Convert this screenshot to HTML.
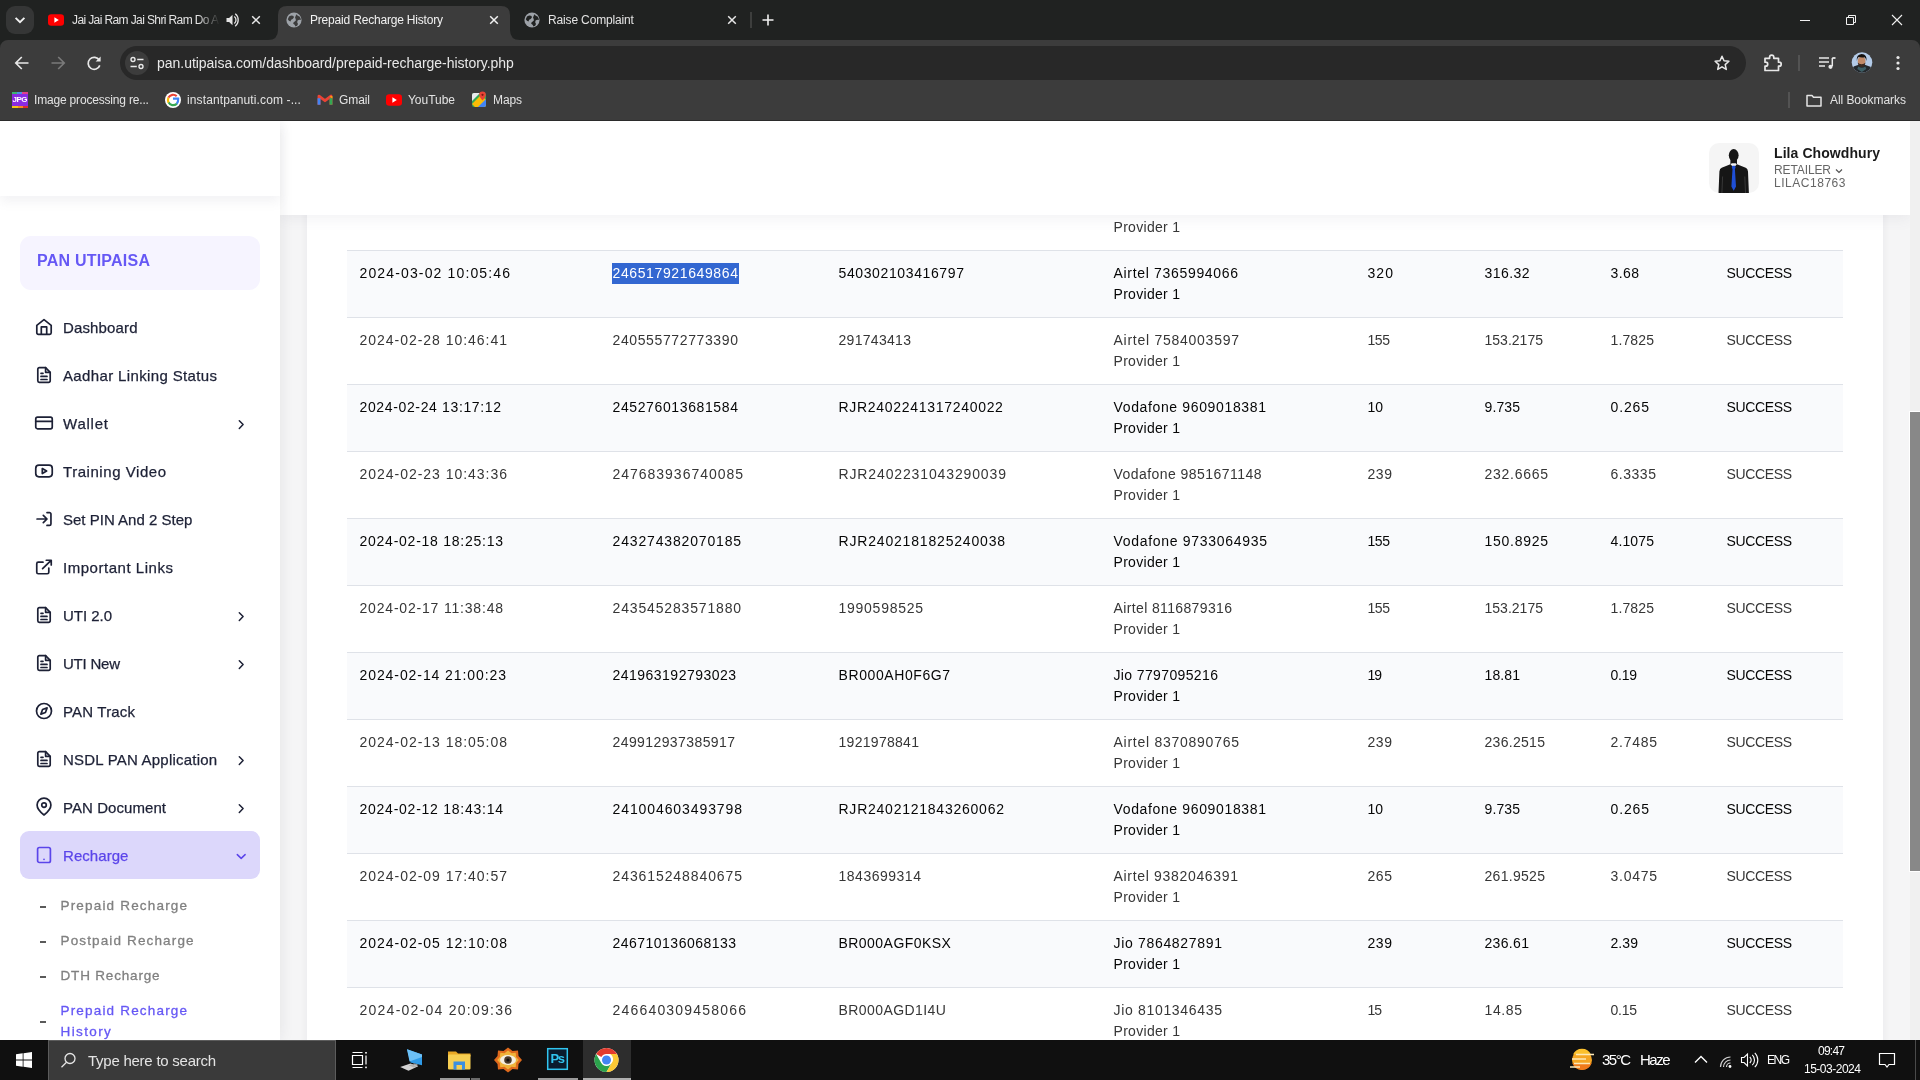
<!DOCTYPE html>
<html lang="en"><head><meta charset="utf-8"><title>Prepaid Recharge History</title>
<style>
*{margin:0;padding:0;box-sizing:border-box}
html,body{width:1920px;height:1080px;overflow:hidden;background:#fff;font-family:"Liberation Sans",sans-serif}
.abs,.abs span,.abs div,.abs svg{position:absolute}
span{white-space:pre}
.ui,#page,#taskbar{will-change:transform}
#tabstrip{left:0;top:0;width:1920px;height:40px;background:#202221}
#toolbar{left:0;top:40px;width:1920px;height:81px;background:#3c3c3c}
#tbline{left:0;top:120px;width:1920px;height:1px;background:#2b2b2b}
.ui{font:12px "Liberation Sans",sans-serif;color:#e3e3e3;line-height:16px}
.url{font:14px "Liberation Sans",sans-serif;color:#e8e8e8;line-height:18px}
#page{left:0;top:121px;width:1920px;height:919px;background:#f5f5f6;overflow:hidden}
#side{left:0;top:0;width:280px;height:919px;background:#fff;z-index:3;box-shadow:0 0 14px rgba(40,40,50,.085)}
#sidehead{left:0;top:0;width:280px;height:75px;background:#fff;box-shadow:0 6px 10px rgba(120,120,140,.09)}
#card{left:307px;top:60px;width:1576px;height:900px;background:#fff;box-shadow:0 0 8px rgba(40,40,50,.06)}
#head{left:280px;top:0;width:1630px;height:94px;background:#fff;z-index:2;box-shadow:0 3px 14px rgba(100,100,120,.09)}
#sbtrack{left:1910px;top:0;width:10px;height:919px;background:#f0f0f0;z-index:4}
#sbthumb{left:1909px;top:290px;width:12px;height:461px;background:#888;border:1px solid #fff;z-index:4}
.row{left:347px;width:1496px;height:67px;border-top:1px solid #dfe2e8}
.row.s{background:#f9fafc}
.t{font:14px "Liberation Sans",sans-serif;line-height:21px;color:#363636}
.t.d{color:#060606}
.m{font:15px "Liberation Sans",sans-serif;line-height:20px;color:#1d2136;-webkit-text-stroke:.25px #1d2136}
.sm{font:13.5px "Liberation Sans",sans-serif;line-height:21px;color:#808080;-webkit-text-stroke:.3px #808080}
.pur{color:#6658f5;-webkit-text-stroke-color:#6658f5}
#taskbar{left:0;top:1040px;width:1920px;height:40px;background:#101010}
.tb{font:12px "Liberation Sans",sans-serif;color:#fff;line-height:16px}
</style></head>
<body>
<div class="abs" id="tabstrip"></div><div class="abs" id="toolbar"></div><div class="abs" id="tbline"></div>

<svg class="abs" style="position:absolute;left:0;top:0" width="1920" height="121" viewBox="0 0 1920 121" fill="none">
<path d="M0 40h8a8 8 0 0 0-8 8zM1920 40h-8a8 8 0 0 1 8 8z" fill="#202221"/>
<!-- tab search -->
<rect x="6" y="6" width="28" height="28" rx="9" fill="#353636"/>
<path d="M15.6 17.8l4.4 4.4 4.4-4.4" stroke="#f1f1f1" stroke-width="1.9"/>
<!-- active tab -->
<path d="M268 40q10 0 10-10V15q0-9 9-9h214q9 0 9 9v15q0 10 10 10z" fill="#3c3c3c"/>
<!-- youtube favicon -->
<rect x="48" y="14.2" width="16" height="11.6" rx="3.2" fill="#f00"/>
<path d="M54.4 17.2l4.4 2.8-4.4 2.8z" fill="#fff"/>
<!-- speaker -->
<path d="M226.5 18v4h2.6l3.4 3.2V14.8L229.100 18z" fill="#e3e3e3"/>
<path d="M234.300 16.500q1.700 1.400 1.700 3.500t-1.700 3.500M235.200 13.800q3 2.300 3 6.200t-3 6.200" stroke="#e3e3e3" stroke-width="1.300"/>
<!-- close x tab1 -->
<path d="M252.200 16.200l7.600 7.600m0-7.600l-7.600 7.600" stroke="#e8e8e8" stroke-width="1.500"/>
<!-- globe active -->
<circle cx="294" cy="20" r="7.600" fill="#9da2a8"/>
<path d="M289 16.500q2.500-1.500 4.500-.5 1.200 1.600-.8 3-2 .4-2.200 2.400-1.800-.4-2.700-2.200zM296.500 14.200q1 1.800 3 2.200 1.300 1.400 1.400 3.600-2-.6-3.300.6-1 1.800.4 3.400-.5 2-2.500 2.600-.6-2.200-2.300-2.800-.2-1.800 1.500-2.400 1.800-.8 1-2.500-1.200-1.200-.2-2.700z" fill="#3c3c3c"/>
<path d="M490.200 16.200l7.600 7.600m0-7.600l-7.600 7.600" stroke="#f1f1f1" stroke-width="1.500"/>
<!-- globe tab3 -->
<circle cx="532" cy="20" r="7.600" fill="#9da2a8"/>
<path d="M527 16.500q2.500-1.500 4.500-.5 1.200 1.600-.8 3-2 .4-2.200 2.400-1.800-.4-2.700-2.200zM534.500 14.200q1 1.800 3 2.200 1.300 1.400 1.400 3.600-2-.6-3.300.6-1 1.800.4 3.400-.5 2-2.500 2.600-.6-2.200-2.300-2.800-.2-1.800 1.500-2.400 1.800-.8 1-2.500-1.200-1.200-.2-2.700z" fill="#202221"/>
<path d="M728.200 16.200l7.600 7.600m0-7.600l-7.600 7.600" stroke="#e8e8e8" stroke-width="1.500"/>
<rect x="750.500" y="12" width="1" height="16" fill="#5a5a5a"/>
<path d="M762.500 20h11M768 14.500v11" stroke="#f1f1f1" stroke-width="1.600"/>
<!-- window controls -->
<path d="M1800 20.500h10" stroke="#f1f1f1" stroke-width="1"/>
<path d="M1846.500 17.500h7v7h-7zM1848.500 17.500v-2h7v7h-2" stroke="#f1f1f1" stroke-width="1"/>
<path d="M1892 15l10 10m0-10l-10 10" stroke="#f1f1f1" stroke-width="1.100"/>
<!-- nav buttons -->
<path d="M28.500 63h-12.500m5.800-6l-6 6 6 6" stroke="#e8e8e8" stroke-width="1.700"/>
<path d="M51.500 63h12.500m-5.800-6l6 6-6 6" stroke="#7a7a7a" stroke-width="1.700"/>
<path d="M99.300 60.200a6 6 0 1 0 .5 5.200" stroke="#e8e8e8" stroke-width="1.700"/>
<path d="M100.600 56.500v5h-5z" fill="#e8e8e8"/>
<!-- omnibox -->
<rect x="120" y="46" width="1626" height="34" rx="17" fill="#282828"/>
<circle cx="137" cy="63" r="12" fill="#3c3c3c"/>
<path d="M137.200 59.500h6.300M130.500 66.500h6.300" stroke="#e8e8e8" stroke-width="1.600"/>
<circle cx="133" cy="59.500" r="2" stroke="#e8e8e8" stroke-width="1.400"/>
<circle cx="141" cy="66.500" r="2" stroke="#e8e8e8" stroke-width="1.400"/>
<!-- star -->
<path d="M1722 56.300l2 4.500 4.900.5-3.700 3.300 1.100 4.800-4.300-2.600-4.300 2.600 1.100-4.800-3.700-3.300 4.900-.5z" stroke="#e8e8e8" stroke-width="1.500" stroke-linejoin="round"/>
<!-- extension puzzle -->
<path d="M1765 58.300h4.600v-1.100a2.100 2.100 0 0 1 4.200 0v1.100h4.700v3.900h.7a2 2 0 0 1 0 4h-.7v4.300h-13.500v-4.300h.7a2 2 0 0 0 0-4h-.7z" stroke="#e8e8e8" stroke-width="1.700" stroke-linejoin="round"/>
<rect x="1798.500" y="55" width="1" height="16" fill="#6a6a6a"/>
<!-- media -->
<path d="M1819 58h10M1819 62h10M1819 66h6" stroke="#e8e8e8" stroke-width="1.600"/>
<path d="M1832.300 58v8.200" stroke="#e8e8e8" stroke-width="1.500"/><circle cx="1830.500" cy="66.800" r="2.100" fill="#e8e8e8"/><path d="M1832.300 58h3.200" stroke="#e8e8e8" stroke-width="1.800"/>
<!-- avatar -->
<clipPath id="avc"><circle cx="1862" cy="62.500" r="10.300"/></clipPath>
<g clip-path="url(#avc)">
<rect x="1851" y="52" width="22" height="22" fill="#b3cbe8"/>
<path d="M1851 74v-5.500q3-3 7-3.500h7.500q4.500.8 7.500 4v5z" fill="#23282c"/>
<path d="M1858.300 66.500q3.500 2.500 7 0l1 2.500-4.500 3-4.500-3z" fill="#3d5f66"/>
<ellipse cx="1861.600" cy="61" rx="3.900" ry="4.700" fill="#c08a68"/>
<path d="M1857.700 62.500q.6 4.500 3.900 4.600 3.300-.1 3.900-4.600-1.200 1.700-3.900 1.700t-3.900-1.700z" fill="#3a2a22"/>
<path d="M1856.800 61q-.8-6.500 4.800-7 5.800.3 4.800 7-.6-3-1.800-3.800-3 .6-6-.2-1.400 1.200-1.800 4z" fill="#14110f"/>
</g>
<!-- dots -->
<circle cx="1898" cy="57.500" r="1.600" fill="#e8e8e8"/><circle cx="1898" cy="63" r="1.600" fill="#e8e8e8"/><circle cx="1898" cy="68.500" r="1.600" fill="#e8e8e8"/>
<!-- bookmarks icons -->
<rect x="12" y="92" width="16" height="16" rx="1.500" fill="#8a2be2"/>
<rect x="12" y="92" width="16" height="2" fill="#3cb371"/><rect x="17" y="92" width="5" height="2" fill="#4a90e2"/><rect x="22" y="92" width="6" height="2" fill="#e0408a"/>
<rect x="12" y="106" width="16" height="2" fill="#f5c518"/><rect x="18" y="106" width="5" height="2" fill="#f58a1f"/><rect x="23" y="106" width="5" height="2" fill="#e02d2d"/>
<circle cx="173" cy="100" r="8" fill="#fff"/>
<path d="M173 98.700h5.200q.3 3.200-1.600 5.200" stroke="#4285f4" stroke-width="2.200"/>
<path d="M176.800 103.800q-2 1.600-4.600 1.300-2.500-.5-3.700-2.800" stroke="#34a853" stroke-width="2.200"/>
<path d="M168.500 102.500q-1.200-2.500 0-5" stroke="#fbbc05" stroke-width="2.200"/>
<path d="M168.500 97.600q1.200-2.300 3.800-2.800 2.600-.3 4.400 1.300" stroke="#ea4335" stroke-width="2.200"/>
<!-- gmail -->
<path d="M319 104.700v-8.600l6 4.600 6-4.600v8.600" stroke="#ea4335" stroke-width="2.900" stroke-linejoin="round"/>
<path d="M319 104.700v-6.500" stroke="#4285f4" stroke-width="2.900"/><path d="M331 104.700v-6.500" stroke="#34a853" stroke-width="2.900"/><path d="M329.600 96.200h2.850v2.400z" fill="#fbbc05"/>
<!-- youtube bm -->
<rect x="386" y="94.200" width="16" height="11.600" rx="3.200" fill="#f00"/><path d="M392.400 97.200l4.400 2.800-4.400 2.800z" fill="#fff"/>
<!-- maps -->
<rect x="472" y="93" width="14" height="14" rx="2" fill="#34a853"/>
<path d="M472 104l9-9 5 5v5a2 2 0 0 1-2 2h-9z" fill="#fbbc05"/><path d="M478 107l8-8v6a2 2 0 0 1-2 2z" fill="#4285f4"/><path d="M472 95a2 2 0 0 1 2-2h6l-8 8z" fill="#e8eaed"/>
<path d="M482.500 91.500a3.300 3.300 0 0 1 3.300 3.300q0 2-3.300 5.700-3.300-3.700-3.300-5.700a3.300 3.300 0 0 1 3.300-3.300z" fill="#ea4335"/><circle cx="482.500" cy="94.800" r="1.100" fill="#7a1a12"/>
<rect x="1788.500" y="92" width="1" height="16" fill="#6a6a6a"/>
<path d="M1807 95.500h5l1.500 1.800h7.500v8.700h-14z" stroke="#e3e3e3" stroke-width="1.500" stroke-linejoin="round"/>
</svg>
<div class="abs ui" style="position:absolute;left:0;top:0;width:1920px;height:121px">
<span style="left:72px;top:12px;letter-spacing:-0.61px;width:148px;overflow:hidden;-webkit-mask-image:linear-gradient(90deg,#000 85%,transparent);">Jai Jai Ram Jai Shri Ram Do A</span><span style="left:310px;top:12px;letter-spacing:-0.19px;color:#f1f1f1;">Prepaid Recharge History</span><span style="left:548px;top:12px;letter-spacing:-0.15px;">Raise Complaint</span><span class="url" style="left:157px;top:54px;letter-spacing:-0.03px;">pan.utipaisa.com/dashboard/prepaid-recharge-history.php</span><span style="left:34px;top:92px;letter-spacing:-0.18px;">Image processing re...</span><span style="left:187px;top:92px;letter-spacing:0.12px;">instantpanuti.com -...</span><span style="left:339px;top:92px;letter-spacing:-0.09px;">Gmail</span><span style="left:408px;top:92px;letter-spacing:-0.03px;">YouTube</span><span style="left:493px;top:92px;letter-spacing:-0.11px;">Maps</span><span style="left:1830px;top:92px;letter-spacing:-0.06px;">All Bookmarks</span><span style="left:12.6px;top:95.3px;letter-spacing:-0.51px;font:bold 8px 'Liberation Sans',sans-serif;color:#fff;line-height:9px;">JPG</span>
</div>
<div class="abs" id="page">
<div id="card"></div>
<div class="abs row" style="top:62px"><span class="t" style="left:766.5px;top:33px;letter-spacing:0.3px;">Provider 1</span></div>
<div class="abs row s" style="top:129px"><span class="t d" style="left:12.5px;top:12px;letter-spacing:1.14px;">2024-03-02 10:05:46</span><div style="left:265px;top:12px;width:127px;height:21px;background:#3367d1"></div><span class="t d" style="left:265.5px;top:12px;letter-spacing:0.62px;color:#fff;">246517921649864</span><span class="t d" style="left:491.5px;top:12px;letter-spacing:0.62px;">540302103416797</span><span class="t d" style="left:766.5px;top:12px;letter-spacing:0.68px;">Airtel 7365994066</span><span class="t d" style="left:1020.5px;top:12px;letter-spacing:1.07px;">320</span><span class="t d" style="left:1137.5px;top:12px;letter-spacing:0.43px;">316.32</span><span class="t d" style="left:1263.5px;top:12px;letter-spacing:0.42px;">3.68</span><span class="t d" style="left:766.5px;top:33px;letter-spacing:0.3px;">Provider 1</span><span class="t d" style="left:1379.5px;top:12px;letter-spacing:-0.36px;">SUCCESS</span></div>
<div class="abs row" style="top:196px"><span class="t" style="left:12.5px;top:12px;letter-spacing:0.97px;">2024-02-28 10:46:41</span><span class="t" style="left:265.5px;top:12px;letter-spacing:0.62px;">240555772773390</span><span class="t" style="left:491.5px;top:12px;letter-spacing:0.3px;">291743413</span><span class="t" style="left:766.5px;top:12px;letter-spacing:0.74px;">Airtel 7584003597</span><span class="t" style="left:1020.5px;top:12px;letter-spacing:-0.43px;">155</span><span class="t" style="left:1137.5px;top:12px;letter-spacing:0.01px;">153.2175</span><span class="t" style="left:1263.5px;top:12px;letter-spacing:0.13px;">1.7825</span><span class="t" style="left:766.5px;top:33px;letter-spacing:0.3px;">Provider 1</span><span class="t" style="left:1379.5px;top:12px;letter-spacing:-0.36px;">SUCCESS</span></div>
<div class="abs row s" style="top:263px"><span class="t d" style="left:12.5px;top:12px;letter-spacing:0.64px;">2024-02-24 13:17:12</span><span class="t d" style="left:265.5px;top:12px;letter-spacing:0.62px;">245276013681584</span><span class="t d" style="left:491.5px;top:12px;letter-spacing:0.7px;">RJR2402241317240022</span><span class="t d" style="left:766.5px;top:12px;letter-spacing:0.64px;">Vodafone 9609018381</span><span class="t d" style="left:1020.5px;top:12px;letter-spacing:-0.08px;">10</span><span class="t d" style="left:1137.5px;top:12px;letter-spacing:0.11px;">9.735</span><span class="t d" style="left:1263.5px;top:12px;letter-spacing:0.86px;">0.265</span><span class="t d" style="left:766.5px;top:33px;letter-spacing:0.3px;">Provider 1</span><span class="t d" style="left:1379.5px;top:12px;letter-spacing:-0.36px;">SUCCESS</span></div>
<div class="abs row" style="top:330px"><span class="t" style="left:12.5px;top:12px;letter-spacing:0.97px;">2024-02-23 10:43:36</span><span class="t" style="left:265.5px;top:12px;letter-spacing:0.98px;">247683936740085</span><span class="t" style="left:491.5px;top:12px;letter-spacing:0.87px;">RJR2402231043290039</span><span class="t" style="left:766.5px;top:12px;letter-spacing:0.45px;">Vodafone 9851671148</span><span class="t" style="left:1020.5px;top:12px;letter-spacing:0.57px;">239</span><span class="t" style="left:1137.5px;top:12px;letter-spacing:0.73px;">232.6665</span><span class="t" style="left:1263.5px;top:12px;letter-spacing:0.53px;">6.3335</span><span class="t" style="left:766.5px;top:33px;letter-spacing:0.3px;">Provider 1</span><span class="t" style="left:1379.5px;top:12px;letter-spacing:-0.36px;">SUCCESS</span></div>
<div class="abs row s" style="top:397px"><span class="t d" style="left:12.5px;top:12px;letter-spacing:0.75px;">2024-02-18 18:25:13</span><span class="t d" style="left:265.5px;top:12px;letter-spacing:0.84px;">243274382070185</span><span class="t d" style="left:491.5px;top:12px;letter-spacing:0.82px;">RJR2402181825240038</span><span class="t d" style="left:766.5px;top:12px;letter-spacing:0.7px;">Vodafone 9733064935</span><span class="t d" style="left:1020.5px;top:12px;letter-spacing:-0.43px;">155</span><span class="t d" style="left:1137.5px;top:12px;letter-spacing:0.73px;">150.8925</span><span class="t d" style="left:1263.5px;top:12px;letter-spacing:0.13px;">4.1075</span><span class="t d" style="left:766.5px;top:33px;letter-spacing:0.3px;">Provider 1</span><span class="t d" style="left:1379.5px;top:12px;letter-spacing:-0.36px;">SUCCESS</span></div>
<div class="abs row" style="top:464px"><span class="t" style="left:12.5px;top:12px;letter-spacing:0.81px;">2024-02-17 11:38:48</span><span class="t" style="left:265.5px;top:12px;letter-spacing:0.84px;">243545283571880</span><span class="t" style="left:491.5px;top:12px;letter-spacing:0.74px;">1990598525</span><span class="t" style="left:766.5px;top:12px;letter-spacing:0.37px;">Airtel 8116879316</span><span class="t" style="left:1020.5px;top:12px;letter-spacing:-0.43px;">155</span><span class="t" style="left:1137.5px;top:12px;letter-spacing:0.01px;">153.2175</span><span class="t" style="left:1263.5px;top:12px;letter-spacing:0.13px;">1.7825</span><span class="t" style="left:766.5px;top:33px;letter-spacing:0.3px;">Provider 1</span><span class="t" style="left:1379.5px;top:12px;letter-spacing:-0.36px;">SUCCESS</span></div>
<div class="abs row s" style="top:531px"><span class="t d" style="left:12.5px;top:12px;letter-spacing:0.92px;">2024-02-14 21:00:23</span><span class="t d" style="left:265.5px;top:12px;letter-spacing:0.48px;">241963192793023</span><span class="t d" style="left:491.5px;top:12px;letter-spacing:0.59px;">BR000AH0F6G7</span><span class="t d" style="left:766.5px;top:12px;letter-spacing:0.37px;">Jio 7797095216</span><span class="t d" style="left:1020.5px;top:12px;letter-spacing:-1.08px;">19</span><span class="t d" style="left:1137.5px;top:12px;letter-spacing:0.11px;">18.81</span><span class="t d" style="left:1263.5px;top:12px;letter-spacing:-0.25px;">0.19</span><span class="t d" style="left:766.5px;top:33px;letter-spacing:0.3px;">Provider 1</span><span class="t d" style="left:1379.5px;top:12px;letter-spacing:-0.36px;">SUCCESS</span></div>
<div class="abs row" style="top:598px"><span class="t" style="left:12.5px;top:12px;letter-spacing:0.97px;">2024-02-13 18:05:08</span><span class="t" style="left:265.5px;top:12px;letter-spacing:0.41px;">249912937385917</span><span class="t" style="left:491.5px;top:12px;letter-spacing:0.29px;">1921978841</span><span class="t" style="left:766.5px;top:12px;letter-spacing:0.74px;">Airtel 8370890765</span><span class="t" style="left:1020.5px;top:12px;letter-spacing:0.57px;">239</span><span class="t" style="left:1137.5px;top:12px;letter-spacing:0.3px;">236.2515</span><span class="t" style="left:1263.5px;top:12px;letter-spacing:0.73px;">2.7485</span><span class="t" style="left:766.5px;top:33px;letter-spacing:0.3px;">Provider 1</span><span class="t" style="left:1379.5px;top:12px;letter-spacing:-0.36px;">SUCCESS</span></div>
<div class="abs row s" style="top:665px"><span class="t d" style="left:12.5px;top:12px;letter-spacing:0.75px;">2024-02-12 18:43:14</span><span class="t d" style="left:265.5px;top:12px;letter-spacing:0.91px;">241004603493798</span><span class="t d" style="left:491.5px;top:12px;letter-spacing:0.76px;">RJR2402121843260062</span><span class="t d" style="left:766.5px;top:12px;letter-spacing:0.64px;">Vodafone 9609018381</span><span class="t d" style="left:1020.5px;top:12px;letter-spacing:-0.08px;">10</span><span class="t d" style="left:1137.5px;top:12px;letter-spacing:0.11px;">9.735</span><span class="t d" style="left:1263.5px;top:12px;letter-spacing:0.86px;">0.265</span><span class="t d" style="left:766.5px;top:33px;letter-spacing:0.3px;">Provider 1</span><span class="t d" style="left:1379.5px;top:12px;letter-spacing:-0.36px;">SUCCESS</span></div>
<div class="abs row" style="top:732px"><span class="t" style="left:12.5px;top:12px;letter-spacing:0.97px;">2024-02-09 17:40:57</span><span class="t" style="left:265.5px;top:12px;letter-spacing:0.91px;">243615248840675</span><span class="t" style="left:491.5px;top:12px;letter-spacing:0.51px;">1843699314</span><span class="t" style="left:766.5px;top:12px;letter-spacing:0.68px;">Airtel 9382046391</span><span class="t" style="left:1020.5px;top:12px;letter-spacing:0.57px;">265</span><span class="t" style="left:1137.5px;top:12px;letter-spacing:0.3px;">261.9525</span><span class="t" style="left:1263.5px;top:12px;letter-spacing:0.73px;">3.0475</span><span class="t" style="left:766.5px;top:33px;letter-spacing:0.3px;">Provider 1</span><span class="t" style="left:1379.5px;top:12px;letter-spacing:-0.36px;">SUCCESS</span></div>
<div class="abs row s" style="top:799px"><span class="t d" style="left:12.5px;top:12px;letter-spacing:0.97px;">2024-02-05 12:10:08</span><span class="t d" style="left:265.5px;top:12px;letter-spacing:0.48px;">246710136068133</span><span class="t d" style="left:491.5px;top:12px;letter-spacing:0.46px;">BR000AGF0KSX</span><span class="t d" style="left:766.5px;top:12px;letter-spacing:0.68px;">Jio 7864827891</span><span class="t d" style="left:1020.5px;top:12px;letter-spacing:0.57px;">239</span><span class="t d" style="left:1137.5px;top:12px;letter-spacing:0.33px;">236.61</span><span class="t d" style="left:1263.5px;top:12px;letter-spacing:0.08px;">2.39</span><span class="t d" style="left:766.5px;top:33px;letter-spacing:0.3px;">Provider 1</span><span class="t d" style="left:1379.5px;top:12px;letter-spacing:-0.36px;">SUCCESS</span></div>
<div class="abs row" style="top:866px"><span class="t" style="left:12.5px;top:12px;letter-spacing:1.25px;">2024-02-04 20:09:36</span><span class="t" style="left:265.5px;top:12px;letter-spacing:1.19px;">246640309458066</span><span class="t" style="left:491.5px;top:12px;letter-spacing:0.43px;">BR000AGD1I4U</span><span class="t" style="left:766.5px;top:12px;letter-spacing:0.68px;">Jio 8101346435</span><span class="t" style="left:1020.5px;top:12px;letter-spacing:-1.08px;">15</span><span class="t" style="left:1137.5px;top:12px;letter-spacing:0.61px;">14.85</span><span class="t" style="left:1263.5px;top:12px;letter-spacing:-0.25px;">0.15</span><span class="t" style="left:766.5px;top:33px;letter-spacing:0.3px;">Provider 1</span><span class="t" style="left:1379.5px;top:12px;letter-spacing:-0.36px;">SUCCESS</span></div>
<div id="side">
<div id="sidehead"></div>
<div style="left:20px;top:115px;width:240px;height:54px;border-radius:11px;background:#f6f4ff"></div>
<span style="left:37px;top:130px;letter-spacing:0.22px;font:bold 16px 'Liberation Sans',sans-serif;line-height:20px;color:#6658f5;">PAN UTIPAISA</span><svg style="left:34px;top:196px" width="20" height="20" viewBox="0 0 20 20" fill="none" stroke="#1d2136" stroke-width="1.700" stroke-linecap="round" stroke-linejoin="round"><path d="M2.800 8.300L10 2.700l7.200 5.600v7.500a1.500 1.500 0 0 1-1.500 1.500H4.300a1.500 1.500 0 0 1-1.500-1.500z"/><path d="M7.300 17.200v-7.300h5.400v7.300"/></svg><span class="m" style="left:63px;top:197px;letter-spacing:0.14px;">Dashboard</span>
<svg style="left:34px;top:244px" width="20" height="20" viewBox="0 0 20 20" fill="none" stroke="#1d2136" stroke-width="1.700" stroke-linecap="round" stroke-linejoin="round"><path d="M11.600 2.700H5.300a1.500 1.500 0 0 0-1.500 1.500v11.600a1.500 1.500 0 0 0 1.500 1.500h9.400a1.500 1.500 0 0 0 1.500-1.500V7.300z"/><path d="M11.600 2.700v4.600h4.600M7 11.400h6M7 14.500h6M7 8.300h2"/></svg><span class="m" style="left:63px;top:245px;letter-spacing:0.36px;">Aadhar Linking Status</span>
<svg style="left:34px;top:292px" width="20" height="20" viewBox="0 0 20 20" fill="none" stroke="#1d2136" stroke-width="1.700" stroke-linecap="round" stroke-linejoin="round"><rect x="1.750" y="4.200" width="16.500" height="11.600" rx="1.800"/><path d="M1.750 8.300h16.500"/></svg><span class="m" style="left:63px;top:293px;letter-spacing:0.78px;">Wallet</span><svg style="left:235px;top:297px" width="12" height="12" viewBox="0 0 12 12" fill="none" stroke="#1d2136" stroke-width="1.500" stroke-linecap="round" stroke-linejoin="round"><path d="M4.300 2.700l3.800 3.900-3.800 3.900"/></svg>
<svg style="left:34px;top:340px" width="20" height="20" viewBox="0 0 20 20" fill="none" stroke="#1d2136" stroke-width="1.700" stroke-linecap="round" stroke-linejoin="round"><rect x="1.750" y="4.200" width="16.500" height="11.600" rx="3.200"/><path d="M8.300 7.500l4.300 2.500-4.300 2.500z"/></svg><span class="m" style="left:63px;top:341px;letter-spacing:0.55px;">Training Video</span>
<svg style="left:34px;top:388px" width="20" height="20" viewBox="0 0 20 20" fill="none" stroke="#1d2136" stroke-width="1.700" stroke-linecap="round" stroke-linejoin="round"><path d="M13 3.550h2.450a1.500 1.500 0 0 1 1.500 1.500v9.900a1.500 1.500 0 0 1-1.500 1.500H13M3.050 10h9.700M9.300 6.300l3.700 3.700-3.700 3.700"/></svg><span class="m" style="left:63px;top:389px;letter-spacing:0.01px;">Set PIN And 2 Step</span>
<svg style="left:34px;top:436px" width="20" height="20" viewBox="0 0 20 20" fill="none" stroke="#1d2136" stroke-width="1.700" stroke-linecap="round" stroke-linejoin="round"><path d="M14.800 11v4.250a1.500 1.500 0 0 1-1.500 1.500H4.250a1.500 1.500 0 0 1-1.500-1.500V6.700a1.500 1.500 0 0 1 1.500-1.500H9M12.300 3.250h4.950V8M8.600 11.700l8.500-8.400"/></svg><span class="m" style="left:63px;top:437px;letter-spacing:0.53px;">Important Links</span>
<svg style="left:34px;top:484px" width="20" height="20" viewBox="0 0 20 20" fill="none" stroke="#1d2136" stroke-width="1.700" stroke-linecap="round" stroke-linejoin="round"><path d="M11.600 2.700H5.300a1.500 1.500 0 0 0-1.500 1.500v11.600a1.500 1.500 0 0 0 1.500 1.500h9.400a1.500 1.500 0 0 0 1.500-1.500V7.300z"/><path d="M11.600 2.700v4.600h4.600M7 11.400h6M7 14.500h6M7 8.300h2"/></svg><span class="m" style="left:63px;top:485px;letter-spacing:-0.03px;">UTI 2.0</span><svg style="left:235px;top:489px" width="12" height="12" viewBox="0 0 12 12" fill="none" stroke="#1d2136" stroke-width="1.500" stroke-linecap="round" stroke-linejoin="round"><path d="M4.300 2.700l3.800 3.900-3.800 3.900"/></svg>
<svg style="left:34px;top:532px" width="20" height="20" viewBox="0 0 20 20" fill="none" stroke="#1d2136" stroke-width="1.700" stroke-linecap="round" stroke-linejoin="round"><path d="M11.600 2.700H5.300a1.500 1.500 0 0 0-1.500 1.500v11.600a1.500 1.500 0 0 0 1.500 1.500h9.400a1.500 1.500 0 0 0 1.500-1.500V7.300z"/><path d="M11.600 2.700v4.600h4.600M7 11.400h6M7 14.500h6M7 8.300h2"/></svg><span class="m" style="left:63px;top:533px;letter-spacing:-0.22px;">UTI New</span><svg style="left:235px;top:537px" width="12" height="12" viewBox="0 0 12 12" fill="none" stroke="#1d2136" stroke-width="1.500" stroke-linecap="round" stroke-linejoin="round"><path d="M4.300 2.700l3.800 3.900-3.800 3.900"/></svg>
<svg style="left:34px;top:580px" width="20" height="20" viewBox="0 0 20 20" fill="none" stroke="#1d2136" stroke-width="1.700" stroke-linecap="round" stroke-linejoin="round"><circle cx="10" cy="10" r="7.500"/><path d="M13.100 6.900l-1.650 4.550-4.550 1.650 1.650-4.550z"/></svg><span class="m" style="left:63px;top:581px;letter-spacing:0.18px;">PAN Track</span>
<svg style="left:34px;top:628px" width="20" height="20" viewBox="0 0 20 20" fill="none" stroke="#1d2136" stroke-width="1.700" stroke-linecap="round" stroke-linejoin="round"><path d="M11.600 2.700H5.300a1.500 1.500 0 0 0-1.500 1.500v11.600a1.500 1.500 0 0 0 1.500 1.500h9.400a1.500 1.500 0 0 0 1.500-1.500V7.300z"/><path d="M11.600 2.700v4.600h4.600M7 11.400h6M7 14.500h6M7 8.300h2"/></svg><span class="m" style="left:63px;top:629px;letter-spacing:0.21px;">NSDL PAN Application</span><svg style="left:235px;top:633px" width="12" height="12" viewBox="0 0 12 12" fill="none" stroke="#1d2136" stroke-width="1.500" stroke-linecap="round" stroke-linejoin="round"><path d="M4.300 2.700l3.800 3.900-3.800 3.900"/></svg>
<svg style="left:34px;top:676px" width="20" height="20" viewBox="0 0 20 20" fill="none" stroke="#1d2136" stroke-width="1.700" stroke-linecap="round" stroke-linejoin="round"><path d="M16.900 8.100c0 4.800-6.900 9.900-6.900 9.900s-6.900-5.100-6.900-9.900a6.900 6.900 0 0 1 13.800 0z"/><circle cx="10" cy="8.100" r="2.300"/></svg><span class="m" style="left:63px;top:677px;letter-spacing:0.07px;">PAN Document</span><svg style="left:235px;top:681px" width="12" height="12" viewBox="0 0 12 12" fill="none" stroke="#1d2136" stroke-width="1.500" stroke-linecap="round" stroke-linejoin="round"><path d="M4.300 2.700l3.800 3.900-3.800 3.900"/></svg>
<div style="left:20px;top:710px;width:240px;height:48px;border-radius:9px;background:#dcd7fb"></div>
<svg style="left:34px;top:724px" width="20" height="20" viewBox="0 0 20 20" fill="none" stroke="#5b45ea" stroke-width="1.700" stroke-linecap="round" stroke-linejoin="round"><rect x="3.600" y="2.500" width="12.800" height="15" rx="1.800"/><path d="M10 14.300h.01"/></svg><span class="m" style="left:63px;top:725px;letter-spacing:0.06px;color:#5b45ea;-webkit-text-stroke-color:#5b45ea;">Recharge</span><svg style="left:235px;top:729px" width="12" height="12" viewBox="0 0 12 12" fill="none" stroke="#5b45ea" stroke-width="1.500" stroke-linecap="round" stroke-linejoin="round"><path d="M2.300 4.600l3.900 3.800 3.900-3.800"/></svg>
<div style="left:40px;top:784.6px;width:6.200px;height:2.200px;background:#5a5a5a"></div><span class="sm" style="left:60.5px;top:774.1px;letter-spacing:1.18px;">Prepaid Recharge</span>
<div style="left:40px;top:819.6px;width:6.200px;height:2.200px;background:#5a5a5a"></div><span class="sm" style="left:60.5px;top:809.1px;letter-spacing:1.14px;">Postpaid Recharge</span>
<div style="left:40px;top:854.6px;width:6.200px;height:2.200px;background:#5a5a5a"></div><span class="sm" style="left:60.5px;top:844.1px;letter-spacing:0.82px;">DTH Recharge</span>
<div style="left:40px;top:899.6px;width:6.200px;height:2.200px;background:#5a5a5a"></div><span class="sm pur" style="left:60.5px;top:879.3px;letter-spacing:1.18px;">Prepaid Recharge</span><span class="sm pur" style="left:60.5px;top:900.2px;letter-spacing:1.38px;">History</span>
</div>
<div id="head">
<div style="left:1429px;top:22px;width:50px;height:50px;border-radius:10px;background:#f5f5f5;overflow:hidden"><svg style="left:0;top:0" width="50" height="50" viewBox="0 0 50 50"><ellipse cx="24.700" cy="12.200" rx="4.900" ry="6.100" fill="#161616"/><path d="M21.400 16v5.200l-8.700 3.500q-2 .9-2.300 3.700L9.500 50h30.400l-.9-21.600q-.3-2.800-2.300-3.700l-8.700-3.500V16z" fill="#161616"/><path d="M21.500 21.200l3.200 3.500 3.200-3.500-1.300-.9h-3.800z" fill="#f2f2f2"/><path d="M23.300 22.800h2.800l.5 2-.7 1.200L27 43.500l-2.300 4.200-2.300-4.200 1.100-17.500-.7-1.200z" fill="#1f4fd6"/><path d="M13.600 33.500L12.900 50M35.800 33.500l.7 16.500" stroke="#5a5a5a" stroke-width=".5" fill="none"/></svg></div>
<span style="left:1494px;top:21.5px;letter-spacing:0.08px;font:bold 14px 'Liberation Sans',sans-serif;line-height:20px;color:#1a1a1a;">Lila Chowdhury</span><span style="left:1494px;top:41.5px;letter-spacing:-0.11px;font:12px 'Liberation Sans',sans-serif;line-height:14px;color:#666;">RETAILER</span><svg style="left:1555px;top:46px" width="8" height="8" viewBox="0 0 8 8" fill="none" stroke="#555" stroke-width="1.200"><path d="M1 2.500l3 3 3-3"/></svg><span style="left:1494px;top:54.5px;letter-spacing:0.53px;font:12px 'Liberation Sans',sans-serif;line-height:14px;color:#666;">LILAC18763</span>
</div>
<div id="sbtrack"></div><div id="sbthumb"></div>
</div>
<div class="abs" id="taskbar">
<svg style="left:0;top:0" width="1920" height="40" viewBox="0 0 1920 40" fill="none">
<rect x="583" y="0" width="48" height="40" fill="#2d2d2d"/>
<rect x="48.500" y="0.500" width="287" height="40" fill="#3a3a3a" stroke="#5c5c5c"/>
<!-- windows logo -->
<path d="M16 14.200l6.700-.9v6.300H16zM23.500 13.200l8.500-1.200v7.600h-8.500zM16 20.400h6.700v6.300l-6.700-.9zM23.500 20.400H32V28l-8.500-1.200z" fill="#fff"/>
<!-- search icon -->
<circle cx="70" cy="18.500" r="5" stroke="#e6e6e6" stroke-width="1.300"/><path d="M66.500 22.300l-5 5" stroke="#e6e6e6" stroke-width="1.300"/>
<!-- task view -->
<path d="M352.500 15.500h10v9h-10zM352.500 12.500h10M352.500 27.500h10M366 15.500v9" stroke="#fff" stroke-width="1.200"/>
<rect x="365.200" y="12" width="1.600" height="1.600" fill="#fff"/><rect x="365.200" y="26.600" width="1.600" height="1.600" fill="#fff"/>
<!-- this pc -->
<path d="M407 9.300l15 5.200v10.700l-11.500-2.700z" fill="#2f9be8"/><path d="M407 9.300l15 5.200v2.500l-12.500 4.500z" fill="#6cc0f6"/>
<path d="M413.500 23.200l4 1v2.300l-4-1z" fill="#9a9a9a"/><path d="M400.200 27l10.300-3.600 7.700 2.900-9.700 4.400z" fill="#d4d4d4"/><path d="M411.500 24.200l5.500 2-3 1.300-5.300-2z" fill="#b0b0b0"/>
<!-- explorer -->
<path d="M448 11.500h8l2 2h12.500v3H448z" fill="#e9a825"/><rect x="448" y="14.500" width="22.500" height="15" rx="1" fill="#f7cf52"/>
<rect x="453.500" y="21.500" width="11.500" height="8" fill="#3b8fe0"/><rect x="456.500" y="25" width="5.500" height="4.500" fill="#f7cf52"/>
<!-- eye app -->
<path d="M508 7.500l4.500 3.500 5.500-.5.500 5.500 3.500 4-3.500 4-.5 5.500-5.500-.5-4.500 3.500-4.500-3.500-5.500.5-.5-5.500-3.500-4 3.500-4 .5-5.500 5.500.5z" fill="#e06a1c"/>
<path d="M508 10.500l3.500 2.700 4.200-.4.400 4.200 2.700 3-2.700 3-.4 4.200-4.200-.4-3.500 2.700-3.500-2.700-4.200.4-.4-4.200-2.700-3 2.700-3 .4-4.200 4.200.4z" fill="#f0b43a"/>
<ellipse cx="508" cy="20" rx="8" ry="5" fill="#f5efe0"/><circle cx="508" cy="20" r="3.800" fill="#4a3a2a"/><circle cx="508" cy="20" r="1.600" fill="#111"/>
<!-- photoshop -->
<rect x="547.700" y="8.700" width="19.600" height="20.600" fill="#0a1c2e" stroke="#31c5f0" stroke-width="1.500"/>
<!-- chrome -->
<circle cx="606.500" cy="20" r="12" fill="#fff"/>
<path d="M606.500 8a12 12 0 0 1 10.400 6h-10.400a6 6 0 0 0-5.200 3l-5.200-3a12 12 0 0 1 10.400-6z" fill="#e33b2e"/>
<path d="M596.100 14a12 12 0 0 0 10.400 18l5.200-9a6 6 0 0 1-10.400 0z" fill="#2ba24c"/>
<path d="M616.900 14a12 12 0 0 1-10.400 18l5.200-9a6 6 0 0 0-1.500-9z" fill="#fcc934"/>
<circle cx="606.500" cy="20" r="5.600" fill="#fff"/><circle cx="606.500" cy="20" r="4.500" fill="#4285f4"/>
<!-- underlines -->
<rect x="440" y="38" width="30" height="2" fill="#9a9a9a"/><rect x="471" y="38" width="9" height="2" fill="#6a6a6a"/>
<rect x="538" y="38" width="40" height="2" fill="#9a9a9a"/><rect x="583" y="38" width="48" height="2" fill="#b0b0b0"/>
<!-- weather -->
<circle cx="1582" cy="20" r="10" fill="#f5a623"/><path d="M1572.500 23a10 10 0 0 0 19 0z" fill="#f07a1a"/><path d="M1573 14.500a10 10 0 0 1 18 0z" fill="#fbc02d"/>
<path d="M1576 14.500h18M1572 19h14M1574 23.500h16M1570 27h10" stroke="#fde9b8" stroke-width="1.500"/>
<!-- tray chevron -->
<path d="M1695 22.500l6-6 6 6" stroke="#fff" stroke-width="1.400"/>
<!-- wifi -->
<path d="M1720.500 27a10 10 0 0 1 10-10M1723.500 27a7 7 0 0 1 7-7M1726.500 27a4 4 0 0 1 4-4" stroke="#d0d0d0" stroke-width="1.200"/><circle cx="1730" cy="26.500" r="1.400" fill="#fff"/>
<!-- volume -->
<path d="M1741.500 17.500h2.500l3.500-3.500v12l-3.500-3.500h-2.500z" stroke="#fff" stroke-width="1.100"/>
<path d="M1749.800 17q1.400 1.400 1.400 3t-1.400 3M1752.300 14.800q2.200 2.200 2.200 5.200t-2.200 5.200M1754.800 12.800q3 3 3 7.200t-3 7.200" stroke="#fff" stroke-width="1.100"/>
<!-- notification -->
<path d="M1879.500 13.500h15v11h-5.500l-2 2.500-2-2.500h-5.500z" stroke="#fff" stroke-width="1.200"/>
<rect x="1915" y="0" width="1" height="40" fill="#4a4a4a"/>
</svg>
<span style="left:88px;top:12px;letter-spacing:-0.25px;font:15px 'Liberation Sans',sans-serif;line-height:18px;color:#e4e4e4;">Type here to search</span><span style="left:550.5px;top:11px;letter-spacing:-1.41px;font:bold 13px 'Liberation Sans',sans-serif;line-height:16px;color:#31c5f0;">Ps</span><span style="left:1602px;top:11px;letter-spacing:-1.51px;font:15px 'Liberation Sans',sans-serif;line-height:18px;color:#fff;">35°C</span><span style="left:1640px;top:11px;letter-spacing:-1.51px;font:15px 'Liberation Sans',sans-serif;line-height:18px;color:#fff;">Haze</span><span class="tb" style="left:1767px;top:12px;letter-spacing:-1.51px;">ENG</span><span class="tb" style="left:1818px;top:3px;letter-spacing:-0.76px;">09:47</span><span class="tb" style="left:1804px;top:21px;letter-spacing:-0.49px;">15-03-2024</span>
</div>
</body></html>
